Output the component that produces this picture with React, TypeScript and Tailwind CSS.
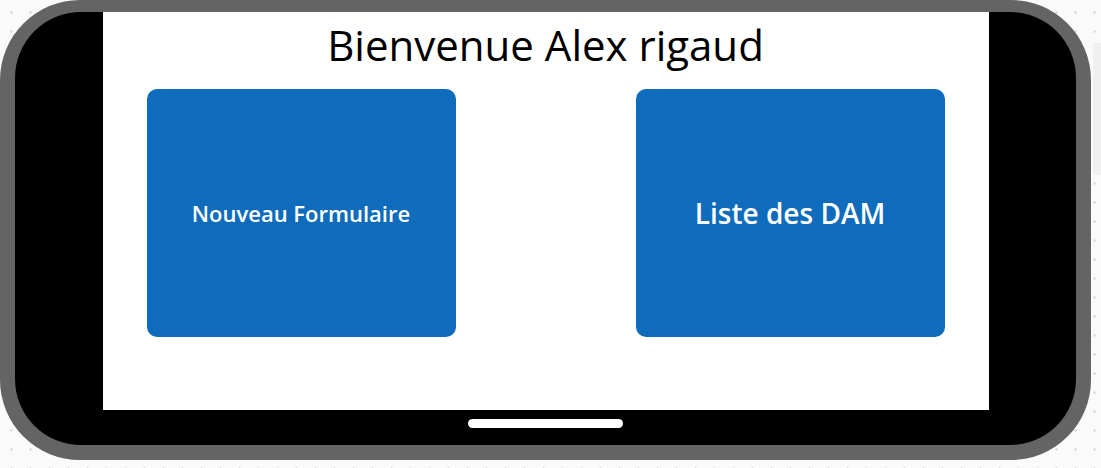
import React from 'react';

const font = { fontFamily: '"Open Sans", "Noto Sans", sans-serif' };

export default function App() {
  return (
    <div
      className="w-[1101px] h-[468px] bg-[#fafafa] bg-[radial-gradient(circle,#dcdcdc_1px,transparent_1.5px)] bg-[size:19px_19px] bg-[position:2px_3px] overflow-hidden relative"
      style={font}
    >
      {/* scrollbar strip at the right edge */}
      <div className="absolute left-[1093px] top-[43px] w-[8px] h-[132px] bg-[#f0f0f0]" />

      {/* phone frame */}
      <div className="w-[1091px] h-[460px] rounded-[80px] bg-[#646464] pt-[12px] px-[15px] pb-[15px]">
        <div className="w-full h-full rounded-[66px] bg-black flex flex-col items-center">
          {/* screen */}
          <div className="w-[886px] h-[398px] bg-white flex flex-col items-center">
            <h1 className="text-[42px] leading-[50px] text-black mt-[8px] font-normal">
              Bienvenue Alex rigaud
            </h1>
            <div className="w-full flex justify-between px-[44px] mt-[19px]">
              <button className="w-[309px] h-[248px] rounded-[10px] bg-[#0f6cbd] text-white text-[22px] font-semibold flex items-center justify-center">
                Nouveau Formulaire
              </button>
              <button className="w-[309px] h-[248px] rounded-[10px] bg-[#0f6cbd] text-white text-[28px] font-semibold flex items-center justify-center">
                Liste des DAM
              </button>
            </div>
          </div>
          {/* home indicator */}
          <div className="mt-[9px] w-[155px] h-[9px] rounded-full bg-white" />
        </div>
      </div>
    </div>
  );
}
